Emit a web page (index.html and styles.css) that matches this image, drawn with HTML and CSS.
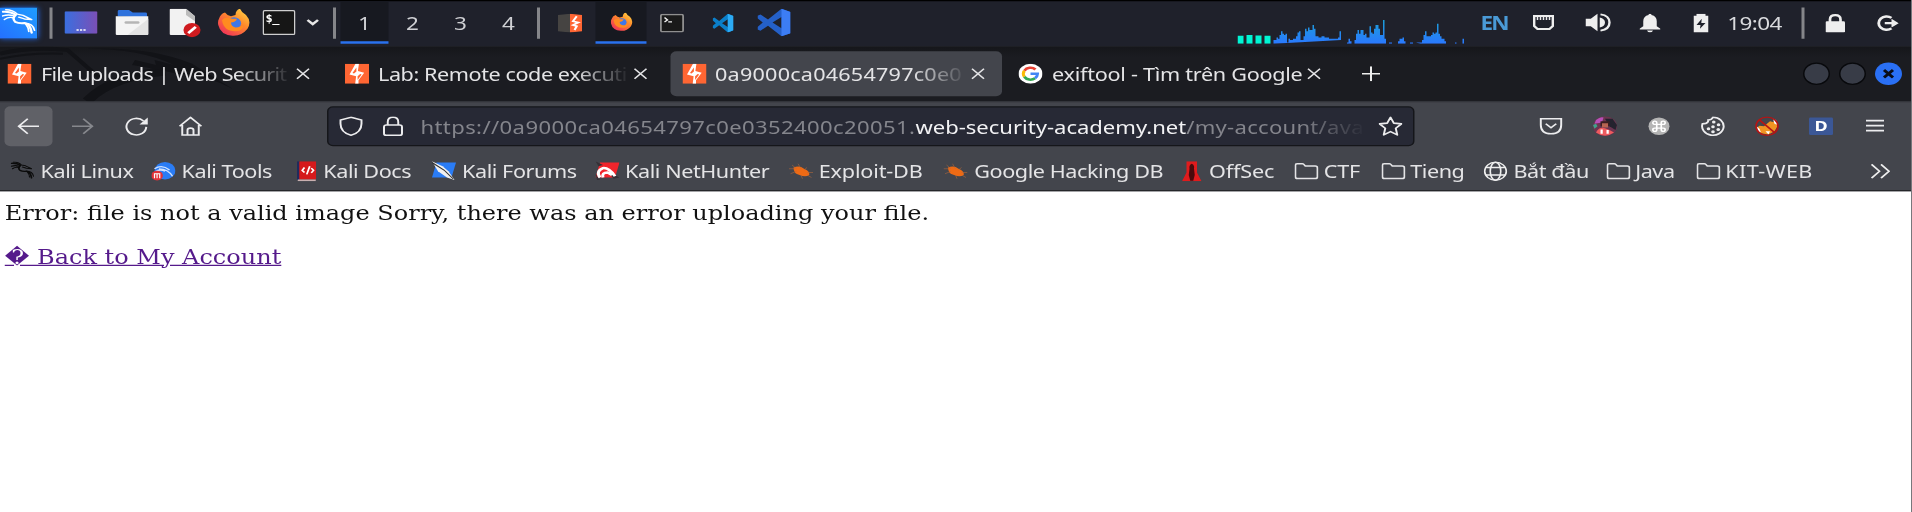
FILE: index.html
```html
<!DOCTYPE html>
<html lang="vi">
<head>
<meta charset="utf-8">
<title>Upload</title>
<link rel="stylesheet" href="styles.css">
</head>
<body>
<svg class="defs" width="0" height="0" aria-hidden="true">
  <defs>
    <linearGradient id="gKali" x1="0" y1="1" x2="1" y2="0"><stop offset="0" stop-color="#2470ff"/><stop offset="1" stop-color="#1f9dff"/></linearGradient>
    <linearGradient id="gDesk" x1="0" y1="0" x2="1" y2="0"><stop offset="0" stop-color="#3a6fe0"/><stop offset="1" stop-color="#7b4fb5"/></linearGradient>
    <linearGradient id="gFox" x1="1" y1="0" x2="0.2" y2="1"><stop offset="0" stop-color="#ffe14a"/><stop offset=".45" stop-color="#ff8a2a"/><stop offset="1" stop-color="#f0305a"/></linearGradient>
    <linearGradient id="gNet" x1="0" y1="0" x2="0" y2="1"><stop offset="0" stop-color="#1ba0d8"/><stop offset="1" stop-color="#2a78ff"/></linearGradient>
    <symbol id="dragon" viewBox="0 0 24 24"><g fill="none" stroke="currentColor" stroke-linecap="round" stroke-linejoin="round"><path stroke-width="1.700" d="M1 2.500Q6 2 10 5Q7 8 9.500 11Q12 12.500 16 12Q20 12.500 21 20"/><path stroke-width="1.200" d="M3 .8Q8 .8 11 4.500L15 5.500 21 9 16 8.500 12 7M.8 6Q5 4.500 8.500 6M2 9Q5 6.500 8 7.500M16 12Q22 12 23 18M17 13Q19 16 19 19"/></g></symbol>
    <symbol id="burp" viewBox="0 0 16 16"><path fill="#ff6633" d="M0 0h16v16H0z"/><path fill="#fff" d="M7 0H9.300L8.600 5.800 12.800 7.200 9 13.200V16H6.800L7.400 10 3 8.600z"/><path fill="#ff6633" d="M7.600 3v3.200L6 7.800 5 7.300zM8.400 13V10l1.700-1.800 1 .4z"/></symbol>
    <symbol id="firefox" viewBox="0 0 22 22"><path fill="url(#gFox)" d="M1 8Q2 4 5 3Q6 5 9 6L12 5Q12 1 15 0Q16 3 19 5Q23 10 20 16Q16 22 10 21.500Q2 21 .5 13Q0 10 1 8z"/><circle cx="11" cy="11.500" r="4.700" fill="#3f77e8"/><path fill="#ff8b20" d="M3 9Q5 6 10 8L13 8Q12 11 9 11Q9 14 12 15Q16 15 17 12Q18 18 12 18Q4 18 3 9z"/></symbol>
    <symbol id="close" viewBox="0 0 10 10"><path d="M1 1l8 8M9 1l-8 8" fill="none" stroke="currentColor" stroke-width="1.100"/></symbol>
    <symbol id="folder" viewBox="0 0 16 16"><path d="M1.700 2h3.500q.6 0 1 .5l1 1.300h6.600q1.500 0 1.500 1.500v7q0 1.500-1.500 1.500H2q-1.400 0-1.400-1.500V3.200Q.6 2 1.700 2z" fill="none" stroke="currentColor" stroke-width="1.200"/></symbol>
    <symbol id="bug" viewBox="0 0 16 16"><path fill="#ee6a14" d="M3 5Q7 3 10 6Q14 8 13.500 11Q11 13 7 11Q3 10 3 5z"/><path d="M0 6l4 0M2 3l3 3M6 2l2 4M1 10l4-2M12 5l-2 2M16 9l-4 0M15 13l-3-2M9 14l-1-3" stroke="#b56a3a" stroke-width=".4"/></symbol>
    <symbol id="code" viewBox="0 0 22 22"><path fill="currentColor" d="M16 0l6 2.500v17L16 22 7 13.500 2 17.500 0 16.500V14.500l3.500-3.500L0 7.500v-2l2-1 5 4zM16 6.500L10 11l6 4.500z" fill-rule="evenodd"/></symbol>
  </defs>
</svg>

<header class="screen-top">
<div class="chrome scaled">
  <div class="panel">
    <div class="panel-left">
      <svg class="menu-logo" viewBox="0 0 25 25"><path fill="url(#gKali)" d="M0 0h25v25H0z"/><svg x="1" y="1" width="23" height="23" color="#fff"><use href="#dragon"/></svg></svg>
      <i class="sep"></i>
      <svg class="ic-desk" viewBox="0 0 22 18"><rect width="22" height="18" rx="1" fill="url(#gDesk)"/><path d="M8 15h1.500M10.300 15h1.500M12.600 15h1.500" stroke="#fff" stroke-width="1.300"/></svg>
      <svg class="ic-files" viewBox="0 0 22 20"><path fill="#2f72dc" d="M1.500 5V1q0-1 1-1H9l2.500 2H20q1 0 1 1v3z"/><path fill="#f4f4f4" d="M0 5h22v14q0 1-1 1H1q-1 0-1-1z"/><path fill="#e3e3e3" d="M22 7v12q0 1-1 1H8z"/><path d="M7 10h8" stroke="#b5b5b5" stroke-width="2" stroke-linecap="round"/></svg>
      <svg class="ic-doc" viewBox="0 0 21 23"><path fill="#f2f2f2" d="M1 0h10l6 6v15H1q-1 0-1-1V1q0-1 1-1z"/><path fill="#bcbcbc" d="M11 0l6 6v4l-6-5z"/><circle cx="15" cy="17" r="5.700" fill="#cf1b1f"/><path d="M12.500 19.500l5-5" stroke="#fff" stroke-width="2"/></svg>
      <svg class="ic-fox"><use href="#firefox"/></svg>
      <svg class="ic-term" viewBox="0 0 22 20"><rect x=".5" y=".5" width="21" height="19" rx="1" fill="#161616" stroke="#cfcfcf"/><text x="2" y="9.500" class="term-text">$_</text></svg>
      <svg class="ic-chev" viewBox="0 0 9 6"><path d="M1 1l3.500 3.300L8 1" fill="none" stroke="#e6e6e6" stroke-width="1.800"/></svg>
      <i class="sep"></i>
      <div class="workspaces"><span class="ws current">1</span><span class="ws">2</span><span class="ws">3</span><span class="ws">4</span></div>
      <i class="sep"></i>
      <div class="tasks">
        <span class="task"><svg width="16" height="15" viewBox="0 0 16 15"><path fill="#464442" d="M0 1l8-1v15l-8-1z"/><path fill="#ff6633" d="M8 0l8 1v13l-8 1z"/><path d="M12.500 2L10 6l3.500 1L10 9l2.500 1-1.500 3" fill="none" stroke="#fff" stroke-width="1.400"/></svg></span>
        <span class="task current"><svg width="15" height="15"><use href="#firefox"/></svg></span>
        <span class="task"><svg width="16" height="15" viewBox="0 0 16 15"><rect x=".6" y=".6" width="14.800" height="13.800" rx="1" fill="#1a1a1a" stroke="#8f8f8f" stroke-width="1.200"/><path d="M3 3l2 2-2 1.500M5.500 6.500H8" stroke="#eee" fill="none"/></svg></span>
        <span class="task code-small"><svg width="14" height="15" viewBox="0 0 22 22" preserveAspectRatio="none"><use href="#code"/><path fill="#2cabf5" d="M16 0l6 2.500v17L16 22z"/></svg></span>
        <span class="task code-big"><svg width="22" height="22"><use href="#code"/><path fill="#3c7df4" d="M16 0l6 2.500v17L16 22z"/></svg></span>
      </div>
    </div>
    <div class="panel-right">
      <svg class="monitor" viewBox="0 0 154 22"><path fill="#00f5d4" d="M0 15.500h4V22H0zM6 15h4v7H6zM12 15.300h4V22h-4zM18 15.500h4V22h-4z"/>
        <path fill="url(#gNet)" d="M24 22v-3h2v-2h1v1h1v-3h1v-3h1v2h1v1h1v-1h1v7h1v-3h1v1h2v-1h2v-2h1v-3h1v-1h1v7h2v-3h1v-6h1v2h1v-3h1v2h2v-4h1v3h1v6h2v1h2v-1h2v1h3v1h6v-1h1v-5h1v7zM73 22v-1h1v-3h1v2h1v2zM78 22v-3h1v-5h1v-3h1v3h1v-3h2v4h1v-1h1v3h2v-9h1v5h1v1h1v-4h1v-3h2v3h1v5h2V3h1v15h1v4zM101 21h2v1h-2zM107 22v-2h1v-2h2v-1h1v3h1v2zM115 21h2v1h-2zM119 21h4v-2h1v-4h1v-3h1v4h3v-1h1v-2h1v1h1v-1h1V6h1v8h1v2h1v2h2v2h1v2h-17zM145 21h1v1h-1zM150 18h1v4h-1z"/></svg>
      <b class="lang">EN</b>
      <svg class="tray net" viewBox="0 0 14 12"><path fill="none" stroke="#eee" stroke-width="1.600" d="M.8.8h12.400v8L11 11.200H3L.8 8.800z"/><path d="M3 1v3M5 1v3M7 1v3M9 1v3M11 1v3" stroke="#eee"/></svg>
      <svg class="tray vol" viewBox="0 0 17 16"><path fill="#eee" d="M0 5h3.500L8 1v14l-4.500-4H0zM9.500 4Q13 5 13 8T9.500 12z"/><path d="M10 1.500Q16 2.500 16 8t-6 6.500" fill="none" stroke="#eee" stroke-width="1.600"/></svg>
      <svg class="tray bell" viewBox="0 0 14 15"><path fill="#eee" d="M7 0q1 0 1 1 3.500 1 3.500 5v4L14 12v.6H0V12l2.500-2V6Q2.500 2 6 1q0-1 1-1zM5 13.400h4Q8.500 15 7 15t-2-1.600z"/></svg>
      <svg class="tray bat" viewBox="0 0 10 15"><path fill="#eee" fill-rule="evenodd" d="M0 1.500h2V0h6v1.500h2V15H0zM5.500 4L2 9h2.700L4.300 12 8 7.300H5.200z"/></svg>
      <span class="clock">19:04</span>
      <i class="sep"></i>
      <svg class="tray lock" viewBox="0 0 13 15"><rect y="6" width="13" height="9" rx="1" fill="#eee"/><path d="M3 7V4.500Q3 1 6.500 1T10 4.500V7" fill="none" stroke="#eee" stroke-width="1.800"/></svg>
      <svg class="tray out" viewBox="0 0 15 13"><path d="M10 2.300A5.300 5.300 0 1 0 10 10.700" fill="none" stroke="#eee" stroke-width="1.900"/><path fill="#eee" d="M5.500 5.600H10V3l4.800 3.500L10 10V7.400H5.500z"/></svg>
    </div>
  </div>

  <div class="tabbar">
    <svg class="wall" viewBox="0 0 180 44" preserveAspectRatio="none"><g fill="none" stroke="#121317"><path stroke-width="3" d="M0 6Q20 0 45 3L66 25"/><path stroke-width="1.500" d="M0 10Q20 5 42 6"/><path stroke-width="7" d="M58 44Q74 24 110 20"/></g><path fill="#121317" d="M58 2Q100 0 128 14L155 34Q140 24 118 22Q100 17 88 15L90 11 104 15 103 11 116 15Q94 2 58 2z"/></svg>
    <div class="tab"><svg class="fav"><use href="#burp"/></svg><span class="title faded tight">File uploads | Web Securit</span><svg class="x"><use href="#close"/></svg></div>
    <div class="tab"><svg class="fav"><use href="#burp"/></svg><span class="title faded">Lab: Remote code executi</span><svg class="x"><use href="#close"/></svg></div>
    <div class="tab active"><svg class="fav"><use href="#burp"/></svg><span class="title faded digits">0a9000ca04654797c0e0</span><svg class="x"><use href="#close"/></svg></div>
    <div class="tab"><svg class="fav" viewBox="0 0 16 16"><circle cx="8" cy="8" r="8" fill="#fff"/><g fill="none" stroke-width="2"><path stroke="#ea4335" d="M3.900 5.600A4.700 4.700 0 0 1 11.300 4.600"/><path stroke="#fbbc05" d="M3.900 5.600A4.700 4.700 0 0 0 3.900 10.400"/><path stroke="#34a853" d="M3.900 10.400A4.700 4.700 0 0 0 11 11.600"/><path stroke="#4285f4" d="M11 11.600Q12.700 10 12.700 8H8"/></g></svg><span class="title loose">exiftool - Tìm trên Google</span><svg class="x"><use href="#close"/></svg></div>
    <svg class="plus" viewBox="0 0 12 12"><path d="M6 0v12M0 6h12" stroke="#eee" stroke-width="1.300"/></svg>
    <div class="winbtns"><i></i><i></i><i class="kill"><svg width="8" height="8" viewBox="0 0 8 8"><path d="M1 1l6 6M7 1L1 7" stroke="#0a0d18" stroke-width="2"/></svg></i></div>
  </div>

  <div class="navbar">
    <div class="btn back"><svg viewBox="0 0 16 16"><path d="M15 8H1.500M7.500 2L1.500 8l6 6"/></svg></div>
    <div class="btn dim"><svg viewBox="0 0 16 16"><path d="M1 8h13.500M8.500 2l6 6-6 6"/></svg></div>
    <div class="btn"><svg viewBox="0 0 16 16"><path d="M14.500 8.500A6.600 6.600 0 1 1 12.700 3.800"/><path class="solid" d="M15.500 1v5.500H10z"/></svg></div>
    <div class="btn"><svg viewBox="0 0 16 16"><path d="M.7 8L8 1l7.300 7M2.500 7v8h11V7M6 15v-4q0-1.500 2-1.500t2 1.500v4"/></svg></div>
    <div class="urlbar">
      <svg viewBox="0 0 16 16"><path d="M8 .8L15 3v3q0 7-7 9.200Q1 13 1 6V3z"/></svg>
      <svg viewBox="0 0 16 16"><rect x="2" y="7" width="12" height="8.200" rx="1.500"/><path d="M4.500 7V4.500Q4.500.8 8 .8t3.500 3.700V7"/></svg>
      <span class="url"><span class="sub">https://0a9000ca04654797c0e0352400c20051.</span><span class="host">web-security-academy.net</span><span class="path">/my-account/ava</span></span>
      <svg viewBox="0 0 16 16"><path stroke-linejoin="round" d="M8 .8l2.200 4.700 5.100.6-3.800 3.500 1 5.300L8 12.300l-4.500 2.600 1-5.300L.7 6.100l5.100-.6z"/></svg>
    </div>
    <div class="addons">
      <svg viewBox="0 0 16 16"><path d="M1.200 2h13.600v5q0 7-6.800 7T1.200 7z"/><path d="M4.500 6L8 9.200 11.500 6"/></svg>
      <svg viewBox="0 0 16 16"><g stroke="none"><circle cx="8" cy="8" r="8" fill="#6b3550"/><path fill="#b84fb8" d="M2 3Q5 0 7 1L6 5 1 6z"/><path fill="#24232e" d="M8 2h5l3 5-1 4-4-3z"/><path fill="#3b1f22" d="M5 4h6v4H5z"/><path fill="#b86452" d="M6 5.500h4v3.500H6z"/><path fill="#ee5a5e" d="M2 13Q4 8 8 9.500T14 13Q8 18 2 13z"/><path fill="#fff" d="M5 10.500h1.500V14H5zM9 11h1.500v3H9z"/><path fill="#40a28a" d="M0 7l2-1 1 2-2 2z"/></g></svg>
      <svg viewBox="0 0 16 16"><circle cx="8" cy="8" r="7" fill="#b5b5b5" stroke="none"/><path stroke="#fff" stroke-width="1.100" d="M6.500 6.500h3v3h-3zM6.500 6.500H5.300A1.300 1.300 0 1 1 6.500 5.200zM9.500 6.500V5.200a1.300 1.300 0 1 1 1.300 1.300zM6.500 9.500v1.300a1.300 1.300 0 1 1-1.300-1.300zM9.500 9.500h1.300a1.300 1.300 0 1 1-1.300 1.300z"/></svg>
      <svg viewBox="0 0 16 16"><path d="M8 .8Q7 3 4.800 3Q5 5 3.200 5.700Q2 6 1 6A7.200 7.200 0 1 0 8 .8z"/><g class="solid"><circle cx="8.500" cy="4.500" r="1.200"/><circle cx="11.700" cy="6.700" r="1.200"/><circle cx="8" cy="8.300" r="1.200"/><circle cx="5" cy="10" r="1.200"/><circle cx="11.500" cy="10.500" r="1.200"/><circle cx="8" cy="12.300" r="1.200"/></g></svg>
      <svg viewBox="0 0 16 16"><g stroke="none"><path fill="#f09422" d="M1.500 9L3 7.500 6 8l4-4 2 .5L14 3l1 5-2 4-4 2.500-5-1z"/><path fill="#fff" d="M1 8l2 2 1 3-2-1zM12 2l2 1 1 4-2-1zM7 12l3 0-1 2.500z"/></g><circle cx="8" cy="8" r="7.300" stroke="#b51414" stroke-width="1.100"/><path stroke="#b51414" d="M3 3l10 10"/></svg>
      <span class="d">D</span>
      <svg viewBox="0 0 16 16"><path d="M2 3.500h12M2 7.500h12M2 11.500h12"/></svg>
    </div>
  </div>

  <div class="bookmarks">
    <span class="bm"><svg color="#0b0b0b"><use href="#dragon"/></svg>Kali Linux</span>
    <span class="bm"><svg viewBox="0 0 16 16"><circle cx="9" cy="7.500" r="7" fill="#2a7cf5"/><path d="M2 6Q7 2 12 7M5 6Q11 6 14 12M3 8q3-2 6 0" fill="none" stroke="#cfe2ff"/><circle cx="3.700" cy="11.500" r="3.900" fill="#e33238"/><path d="M2 13.500v-3.500h3.500v3.500M3.700 10v3.500" stroke="#fff" fill="none" stroke-width=".8"/></svg>Kali Tools</span>
    <span class="bm"><svg viewBox="0 0 16 16"><path fill="#202b5c" d="M2 0h2v15H2z"/><path fill="#d51a1c" d="M3.500 0h11.200v14.500H3.500z"/><path fill="#c9b0b0" d="M2.500 14.500h12V16h-12z"/><path d="M7 5L5.500 7.300 7 9M11.500 5.500L13 7.300l-1.500 2M10.500 4l-2 6.500" stroke="#fff" fill="none" stroke-width="1.200"/></svg>Kali Docs</span>
    <span class="bm"><svg viewBox="0 0 16 16"><path fill="#2a7cf5" d="M3 1h13l-3 12H0z"/><path fill="#f1f1f1" d="M0 0l7 4 4 4 4 7-5-2-6-5z"/><path d="M0 1l8 6 6 7" stroke="#333" stroke-width=".8" fill="none"/></svg>Kali Forums</span>
    <span class="bm"><svg viewBox="0 0 16 16"><path fill="#f1252c" d="M3 1h13l-3 12H0z"/><path fill="#343036" d="M0 0l5 3-3 1zM9 9l7 4-4 1zM0 10l3 5H1z"/><path d="M3 13Q0 8 5 5.500Q9 5 13 12M5 13Q4 9 8 9l3 2" stroke="#fff" stroke-width="2" fill="none"/></svg>Kali NetHunter</span>
    <span class="bm wide"><svg><use href="#bug"/></svg>Exploit-DB</span>
    <span class="bm"><svg><use href="#bug"/></svg>Google Hacking DB</span>
    <span class="bm wide"><svg viewBox="0 0 16 16"><path fill="#e01b1d" d="M5 0h7v9l3 7H2l3-7z"/><path fill="#4a0a0c" d="M8.500 2q2 1 1.500 4l.5 5-1 4.500h-2l-1-4.500.5-5q-.5-3 1.500-4z"/></svg>OffSec</span>
    <span class="bm folder wide"><svg><use href="#folder"/></svg>CTF</span>
    <span class="bm folder"><svg><use href="#folder"/></svg>Tieng</span>
    <span class="bm"><svg viewBox="0 0 16 16"><g fill="none" stroke="#eee" stroke-width="1.100"><circle cx="8" cy="8" r="7.200"/><ellipse cx="8" cy="8" rx="3.500" ry="7.200"/><path d="M1.500 5h13M1.500 11h13"/></g></svg>Bắt đầu</span>
    <span class="bm folder"><svg><use href="#folder"/></svg>Java</span>
    <span class="bm folder widest"><svg><use href="#folder"/></svg>KIT-WEB</span>
    <svg class="more" viewBox="0 0 13 12"><path d="M.7.500L6 6 .7 11.500M7 .5L12.300 6 7 11.500" fill="none" stroke="#eee" stroke-width="1.200"/></svg>
  </div>
</div>
</header>

<main class="page scaled">
  <p class="msg">Error: file is not a valid image Sorry, there was an error uploading your file.</p>
  <p class="msg"><a href="#">&#xFFFD; Back to My Account</a></p>
</main>
</body>
</html>
```

FILE: styles.css
```css
* { box-sizing: border-box; }
html, body { margin: 0; height: 512px; overflow: hidden; background: #fff; }
body { border-right: 1px solid #77787c; }
.defs { display: block; }
svg { flex: none; display: block; }

/* The screen is drawn at 1.5 x 1.25 of its logical size */
.scaled { width: 1274px; transform: scale(1.5, 1.25); transform-origin: 0 0; }
.screen-top { height: 191px; }
.chrome {
  height: 152.800px;
  font: 14.4px "Noto Sans", "Open Sans", sans-serif;
  letter-spacing: -.28px;
  color: #e4e4e6;
  background: #43454c;
}

.panel {
  height: 36.500px; border-top: 1.600px solid #000; padding-bottom: 0;
  background: #1f212b; display: flex; justify-content: space-between;
}
.panel-left, .panel-right { display: flex; align-items: center; height: 34px; }
.sep { width: 2px; height: 25px; background: #85868a; flex: none; }
.menu-logo { width: 25px; height: 25px; margin-right: 7.500px; box-shadow: 0 0 4px #2470ff; }
.ic-desk { width: 22px; height: 18px; margin-left: 8.800px; }
.ic-files { width: 22px; height: 20px; margin-left: 11.500px; }
.ic-doc { width: 21px; height: 23px; margin-left: 14px; }
.ic-fox { width: 22px; height: 22px; margin-left: 11.500px; }
.ic-term { width: 22px; height: 20px; margin-left: 7.500px; }
.term-text { font: bold 8px "DejaVu Sans Mono", monospace; fill: #fff; }
.ic-chev { width: 9px; height: 6px; margin: 0 9px 0 7.500px; }
.workspaces { display: flex; margin-left: 2.500px; height: 34px; }
.ws { width: 32px; line-height: 34px; text-align: center; font-size: 15px; color: #cfd0d4; }
.ws.current, .task.current { background: #171920; border-bottom: 2px solid #2a72ee; }
.workspaces + .sep { margin-left: 3.500px; }
.tasks { display: flex; height: 34px; margin-left: 3px; }
.task { width: 34px; display: flex; align-items: center; justify-content: center; }
.code-small { color: #0b7fc9; }
.code-big { color: #2460c8; width: 34px; }

.monitor { width: 154px; height: 22px; margin: 12px 9px 0 0; }
.lang { font: bold 15px/34px "Noto Sans", sans-serif; color: #4a9ad6; width: 18px; letter-spacing: -1.2px; margin: 0 17px 0 -1px; white-space: nowrap; }
.net { width: 14px; height: 12px; margin-right: 20.500px; }
.vol { width: 17px; height: 16px; margin-right: 19.500px; }
.bell { width: 14px; height: 15px; margin-right: 21.500px; }
.bat { width: 10px; height: 15px; margin-right: 13px; }
.clock { font-size: 15px; width: 37px; margin-right: 12px; letter-spacing: -.4px; color: #d9dadd; }
.lock { width: 13px; height: 15px; margin: 0 21px 0 14px; }
.out { width: 15px; height: 13px; margin-right: 8.500px; }

.tabbar {
  position: relative; height: 44px; padding: 4.400px 6px 4px 0;
  display: flex; gap: 3.700px; background: linear-gradient(#15161a, #1b1c21 20%);
  overflow: hidden;
}
.wall { position: absolute; left: 0; top: 0; width: 180px; height: 44px; }
.tab { position: relative; width: 221px; flex: none; height: 36px; border-radius: 4px; display: flex; align-items: center; padding-left: 8px; }
.tab:first-of-type { margin-left: -2.700px; }
.tab.active { background: #43454c; }
.fav { width: 16px; height: 16px; margin-right: 6px; }
.title { width: 168px; margin-right: 2px; padding-top: 1px; white-space: nowrap; }
.tight { letter-spacing: -.5px; }
.loose { letter-spacing: -.18px; }
.digits { letter-spacing: .15px; }
.faded { -webkit-mask-image: linear-gradient(90deg, #000 78%, transparent); mask-image: linear-gradient(90deg, #000 78%, transparent); }
.x { width: 10px; height: 10px; }
.plus { width: 12px; height: 12px; margin: 12px 0 0 12px; }
.winbtns { display: flex; gap: 6px; margin: 9px 0 0 auto; }
.winbtns i { width: 18px; height: 18px; border-radius: 50%; background: #383c47; border: 1px solid #08090c; display: flex; align-items: center; justify-content: center; }
.winbtns .kill { background: #2a70f5; border: 0; }

.navbar { height: 40.500px; padding: 3.800px 16px 0 3.300px; display: flex; border-top: 1px solid #3a3b41; }
.navbar svg { width: 16px; height: 16px; fill: none; stroke: #ececee; stroke-width: 1.300; }
.navbar .solid { fill: #ececee; stroke: none; }
.btn { width: 32px; height: 32px; margin-right: 4px; border-radius: 4px; display: flex; align-items: center; justify-content: center; flex: none; }
.back { background: #606167; }
.dim { opacity: .4; }
.urlbar { margin-left: 71px; width: 725px; height: 32px; flex: none; border: 1px solid #15161a; border-radius: 4px; background: #272935; display: flex; align-items: center; padding: 0 7px; }
.urlbar svg + svg { margin-left: 12px; }
.url { width: 631px; margin: 0 8px 0 10px; white-space: nowrap; color: #84858c; font-size: 14.7px; letter-spacing: 0; -webkit-mask-image: linear-gradient(90deg, #000 93%, transparent); mask-image: linear-gradient(90deg, #000 93%, transparent); }
.sub { letter-spacing: .27px; }
.path { letter-spacing: .2px; }
.host { color: #f2f2f4; }
.addons { display: flex; gap: 20px; margin-left: auto; align-items: center; height: 32px; }
.d { width: 16px; height: 14px; background: #3b5796; border-radius: 1px; font: bold 12px/14px "Noto Sans", sans-serif; text-align: center; color: #fff; }

.bookmarks {
  height: 31.800px; padding: .8px 0 0 7px; border-bottom: 1px solid #25262a;
  display: grid; align-items: center; white-space: nowrap;
  grid-template-columns: 94px 94.500px 92.500px 108.700px 129.100px 103.700px 156.500px 77.300px 57.700px 68px 82px 60px 116px 13px;
}
.bm { display: flex; align-items: center; }
.bm.wide { letter-spacing: -.1px; }
.bm.widest { letter-spacing: .25px; }
.bm svg { width: 16px; height: 16px; margin-right: 4px; }
.bm.folder svg { margin-right: 3.200px; }
.more { width: 13px; height: 12px; }

.page { padding: 7.600px 3.200px; font: 16px/19px "DejaVu Serif", serif; color: #111; }
.msg { margin: 0 0 16px; white-space: nowrap; }
.msg a { color: #551a8b; }
```
